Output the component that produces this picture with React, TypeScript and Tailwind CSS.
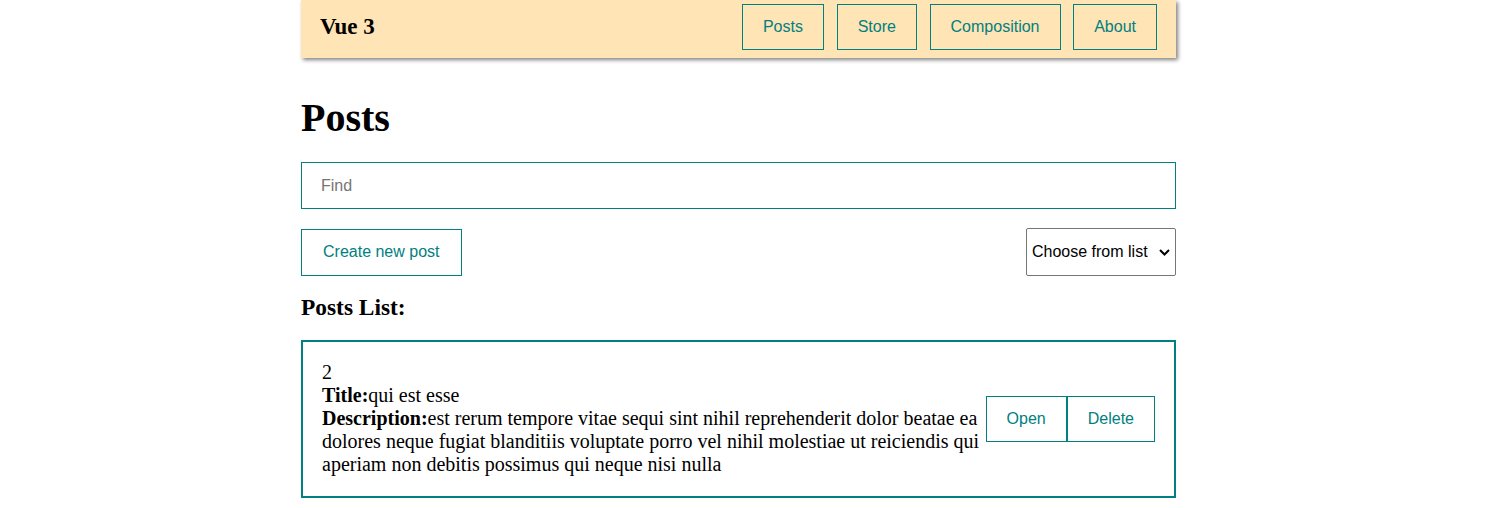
import { useState } from 'react';

const NAV = ['Posts', 'Store', 'Composition', 'About'];

const POSTS = [
  {
    id: 2,
    title: 'qui est esse',
    body: 'est rerum tempore vitae sequi sint nihil reprehenderit dolor beatae ea dolores neque fugiat blanditiis voluptate porro vel nihil molestiae ut reiciendis qui aperiam non debitis possimus qui neque nisi nulla',
  },
];

const btn =
  "border border-[#008080] px-5 h-[46px] leading-6 text-[16px] text-[#008080] font-['Liberation_Sans',Arial,sans-serif] bg-transparent";

export default function App() {
  const [query, setQuery] = useState('');
  const [posts, setPosts] = useState(POSTS);

  const shown = posts.filter((p) => p.title.toLowerCase().includes(query.toLowerCase()));

  return (
    <div className="font-['Liberation_Serif','Times_New_Roman',serif] text-[20px] leading-[1.15] text-black bg-white min-h-[508px]">
      <div className="ml-[301px] w-[875px]">
        <nav className="flex items-center justify-between h-[58px] pb-1 pl-[19px] pr-[19px] bg-[#ffe4b5] shadow-[2px_2px_4px_gray]">
          <div className="text-[23px] font-bold">Vue 3</div>
          <div className="flex gap-[12.7px]">
            {NAV.map((n) => (
              <button key={n} className={btn}>
                {n}
              </button>
            ))}
          </div>
        </nav>

        <h1 className="mt-[37px] text-[40px] leading-[46px] font-bold">Posts</h1>

        <input
          value={query}
          onChange={(e) => setQuery(e.target.value)}
          placeholder="Find"
          className="mt-[21px] block w-full h-[47px] border border-[#008080] px-[19px] text-[16px] font-['Liberation_Sans',Arial,sans-serif] placeholder:text-[#757575] outline-none"
        />

        <div className="mt-[19px] flex items-center justify-between">
          <button className={btn + ' h-[47px] px-[21px]'}>Create new post</button>
          <div className="flex items-center w-[150px] h-[48px] border border-[#767676] rounded-[2px] pl-[5px] text-[16px] font-['Liberation_Sans',Arial,sans-serif]">
            <span>Choose from list</span>
            <svg width="11" height="7" viewBox="0 0 11 7" className="ml-[11px]">
              <polyline points="1,1 5.5,5.5 10,1" fill="none" stroke="black" strokeWidth="2" />
            </svg>
          </div>
        </div>

        <h3 className="mt-[18px] text-[23.4px] leading-[27px] font-bold">Posts List:</h3>

        <div className="mt-[19px]">
          {shown.map((p) => (
            <div key={p.id} className="flex items-center border-2 border-[#008080] px-[19px] pt-[19px] pb-[20px]">
              <div className="flex-1">
                <div>{p.id}</div>
                <div>
                  <strong>Title:</strong>
                  {p.title}
                </div>
                <div>
                  <strong>Description:</strong>
                  {p.body}
                </div>
              </div>
              <div className="flex shrink-0">
                <button className={btn}>Open</button>
                <button className={btn} onClick={() => setPosts(posts.filter((x) => x.id !== p.id))}>
                  Delete
                </button>
              </div>
            </div>
          ))}
        </div>
      </div>
    </div>
  );
}
